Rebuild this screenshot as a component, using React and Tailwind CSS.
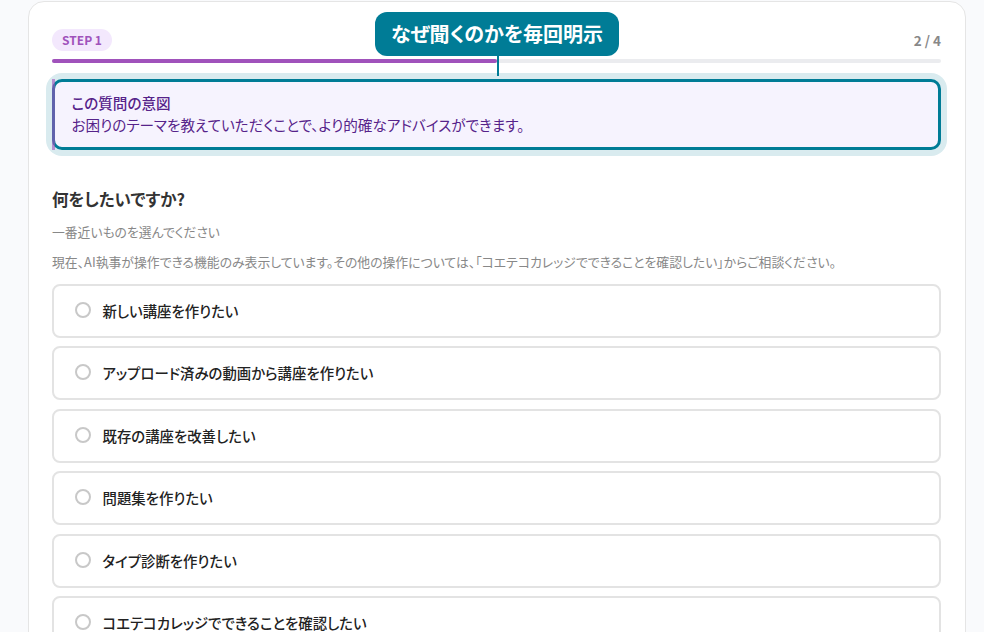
import React from "react";

const options = [
  "新しい講座を作りたい",
  "アップロード済みの動画から講座を作りたい",
  "既存の講座を改善したい",
  "問題集を作りたい",
  "タイプ診断を作りたい",
  "コエテコカレッジでできることを確認したい",
];

const App = () => {
  return (
    <div className="h-[632px] overflow-hidden bg-[#f9fafc] px-[28px] pt-px font-['Noto_Sans_CJK_JP','Noto_Sans',sans-serif] [font-feature-settings:'palt']">
      <div className="relative h-[700px] w-[938px] rounded-t-2xl border border-[#e5e5e5] bg-white pl-[23px] pr-[24px] pt-[27px]">
        {/* callout */}
        <div className="absolute left-[346px] top-[10px] flex h-[44px] w-[244px] items-center justify-center rounded-xl bg-[#007c96] text-[20px] font-bold text-white">
          なぜ聞くのかを毎回明示
        </div>
        <div className="absolute left-[468px] top-[54px] z-10 h-[20px] w-[2px] bg-[#007c96]" />

        <div className="flex items-center justify-between">
          <span className="flex h-[22px] w-[60px] items-center justify-center rounded-full bg-[#f3e8fd] text-[12px] font-bold text-[#a052bb]">
            STEP 1
          </span>
          <span className="text-[13.5px] font-bold text-[#888888]">2 / 4</span>
        </div>

        <div className="mt-[8px] h-[4px] w-full rounded-full bg-[#ebecef]">
          <div className="h-full w-1/2 rounded-full bg-[#a052bb]" />
        </div>

        <div className="relative mt-[16px] h-[71px]">
          <div className="relative h-[71px] rounded-[10px] border-[3px] border-[#007c96] bg-[#f6f3fe] pl-[16.5px] pt-[11px] text-[#56238a] shadow-[0_0_0_6px_#d9ebef]">
            <p className="text-[14.6px] font-medium leading-[20px]">この質問の意図</p>
            <p className="text-[14.6px] leading-[24px]">
              お困りのテーマを教えていただくことで、より的確なアドバイスができます。
            </p>
          </div>
          <div className="absolute left-0 top-0 h-[71px] w-[3px] bg-[#a052bb] opacity-60" />
        </div>

        <h2 className="mt-[37px] text-[16.5px] font-bold leading-[24px] text-[#333333]">
          何をしたいですか?
        </h2>
        <p className="mt-[11px] text-[12.8px] leading-[20px] text-[#888888]">
          一番近いものを選んでください
        </p>
        <p className="mt-[10px] text-[12.85px] leading-[20px] text-[#888888]">
          現在、AI執事が操作できる機能のみ表示しています。その他の操作については、「コエテコカレッジでできることを確認したい」からご相談ください。
        </p>

        <div className="mt-[12px] flex flex-col gap-[8.4px]">
          {options.map((label) => (
            <div
              key={label}
              className="flex h-[54px] shrink-0 items-center rounded-lg border-2 border-[#e3e3e3] bg-white pl-[21px]"
            >
              <span className="mb-[2px] h-[16px] w-[16px] shrink-0 rounded-full border-2 border-[#c8c8c8] bg-white" />
              <span className="ml-[11.5px] text-[14.4px] font-medium leading-[20px] text-[#222222]">{label}</span>
            </div>
          ))}
        </div>
      </div>
    </div>
  );
};

export default App;
